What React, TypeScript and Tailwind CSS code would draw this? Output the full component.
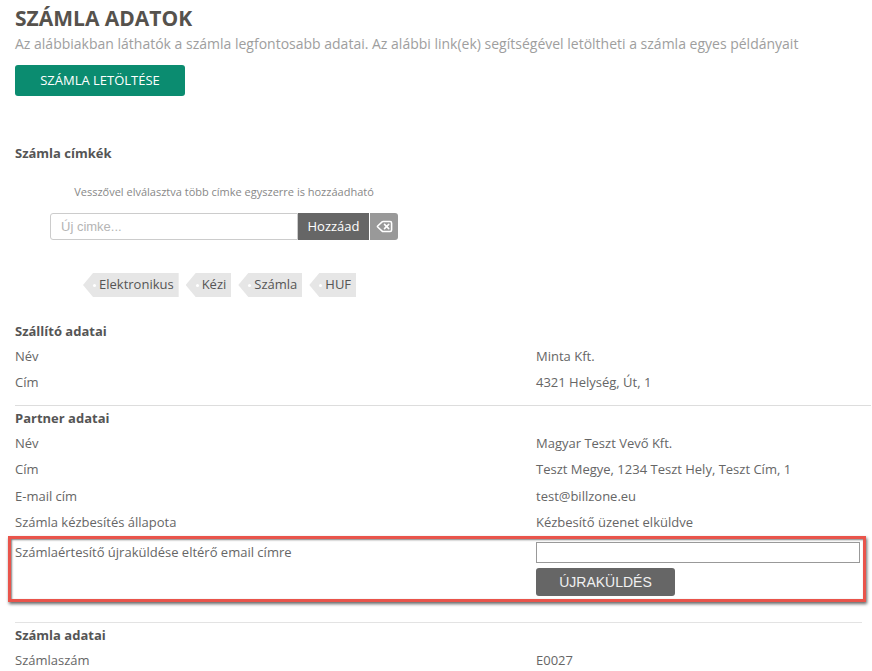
import { FC } from "react";
import { Delete } from "lucide-react";

interface IRow {
  label: string;
  value: string;
}

const supplier: IRow[] = [
  { label: "Név", value: "Minta Kft." },
  { label: "Cím", value: "4321 Helység, Út, 1" },
];

const partner: IRow[] = [
  { label: "Név", value: "Magyar Teszt Vevő Kft." },
  { label: "Cím", value: "Teszt Megye, 1234 Teszt Hely, Teszt Cím, 1" },
  { label: "E-mail cím", value: "test@billzone.eu" },
  { label: "Számla kézbesítés állapota", value: "Kézbesítő üzenet elküldve" },
];

const tags = ["Elektronikus", "Kézi", "Számla", "HUF"];

const Row: FC<{ item: IRow }> = ({ item }) => (
  <div className="flex h-[26.5px] items-center text-[13px] text-[#666]">
    <div className="w-[521px] shrink-0">{item.label}</div>
    <div>{item.value}</div>
  </div>
);

const SectionTitle: FC<{ title: string }> = ({ title }) => (
  <div className="h-6 leading-6 text-[13px] font-bold text-[#555]">{title}</div>
);

const Tag: FC<{ label: string }> = ({ label }) => (
  <div className="relative flex h-6 items-center bg-[#e6e6e6] pl-4 pr-[5px] text-[13px] text-[#555] [clip-path:polygon(10px_0,100%_0,100%_100%,10px_100%,0_50%)]">
    <span className="absolute left-[10px] top-[10.5px] h-[3px] w-[3px] rounded-full bg-white" />
    {label}
  </div>
);

export default function App() {
  return (
    <div className="min-h-screen bg-white pl-[15px] pr-[1px] pt-1 font-['Open_Sans',sans-serif]">
      <h1 className="h-7 leading-7 text-[21px] font-bold text-[#56524d]">SZÁMLA ADATOK</h1>
      <p className="mt-0.5 h-5 leading-5 text-[14px] text-[#9e9e9e]">
        Az alábbiakban láthatók a számla legfontosabb adatai. Az alábbi link(ek) segítségével letöltheti a számla egyes példányait
      </p>
      <button className="mt-[11px] h-[31px] w-[170px] rounded-[3px] bg-[#0b8c70] text-[13px] text-white">
        SZÁMLA LETÖLTÉSE
      </button>

      <div className="mt-[45px]">
        <SectionTitle title="Számla címkék" />
      </div>

      <div className="w-[418px]">
        <div className="mt-[19px] h-4 text-center text-[11px] leading-4 text-[#888]">
          Vesszővel elválasztva több címke egyszerre is hozzáadható
        </div>
        <div className="mt-[13px] flex h-[27px] justify-center">
          <input
            className="h-full w-[248px] rounded-l-[3px] border border-[#cccccc] px-[10px] font-['Liberation_Sans',sans-serif] text-[13px] text-[#555] placeholder:text-[#b5b5b5] focus:outline-none"
            placeholder="Új cimke..."
          />
          <button className="h-full w-[71px] bg-[#666666] text-[13px] text-white">Hozzáad</button>
          <button className="ml-px flex h-full w-[28px] items-center justify-center rounded-r-[3px] bg-[#999999] text-white">
            <Delete size={17} strokeWidth={2.2} />
          </button>
        </div>
      </div>

      <div className="mt-[33px] flex gap-[7px] pl-[68px]">
        {tags.map((t) => (
          <Tag key={t} label={t} />
        ))}
      </div>

      <div className="mt-[22px]">
        <SectionTitle title="Szállító adatai" />
        {supplier.map((r) => (
          <Row key={r.label + r.value} item={r} />
        ))}
      </div>

      <div className="mt-[9px] h-px bg-[#dddddd]" />

      <SectionTitle title="Partner adatai" />
      {partner.map((r) => (
        <Row key={r.label + r.value} item={r} />
      ))}

      <div className="-ml-[7px] mr-[5px] flex border-[3px] border-[#e9544b] pb-[3px] pl-1 pr-[3px] shadow-[1px_2px_3px_rgba(0,0,0,0.6),inset_1px_1px_2px_rgba(0,0,0,0.5)]">
        <div className="h-[26px] w-[521px] shrink-0 text-[13px] leading-[26px] text-[#666]">
          Számlaértesítő újraküldése eltérő email címre
        </div>
        <div className="flex-1 pt-[3px]">
          <input className="block h-[21px] w-full border border-[#999999] px-1 text-[13px] focus:outline-none" />
          <button className="mt-[5px] h-7 w-[139px] rounded-[3px] bg-[#666666] font-['Liberation_Sans',sans-serif] text-[14px] text-[#f0f0f0]">
            ÚJRAKÜLDÉS
          </button>
        </div>
      </div>

      <div className="mt-5 mr-[9px] h-px bg-[#e3e3e3]" />

      <SectionTitle title="Számla adatai" />
      <Row item={{ label: "Számlaszám", value: "E0027" }} />
    </div>
  );
}
